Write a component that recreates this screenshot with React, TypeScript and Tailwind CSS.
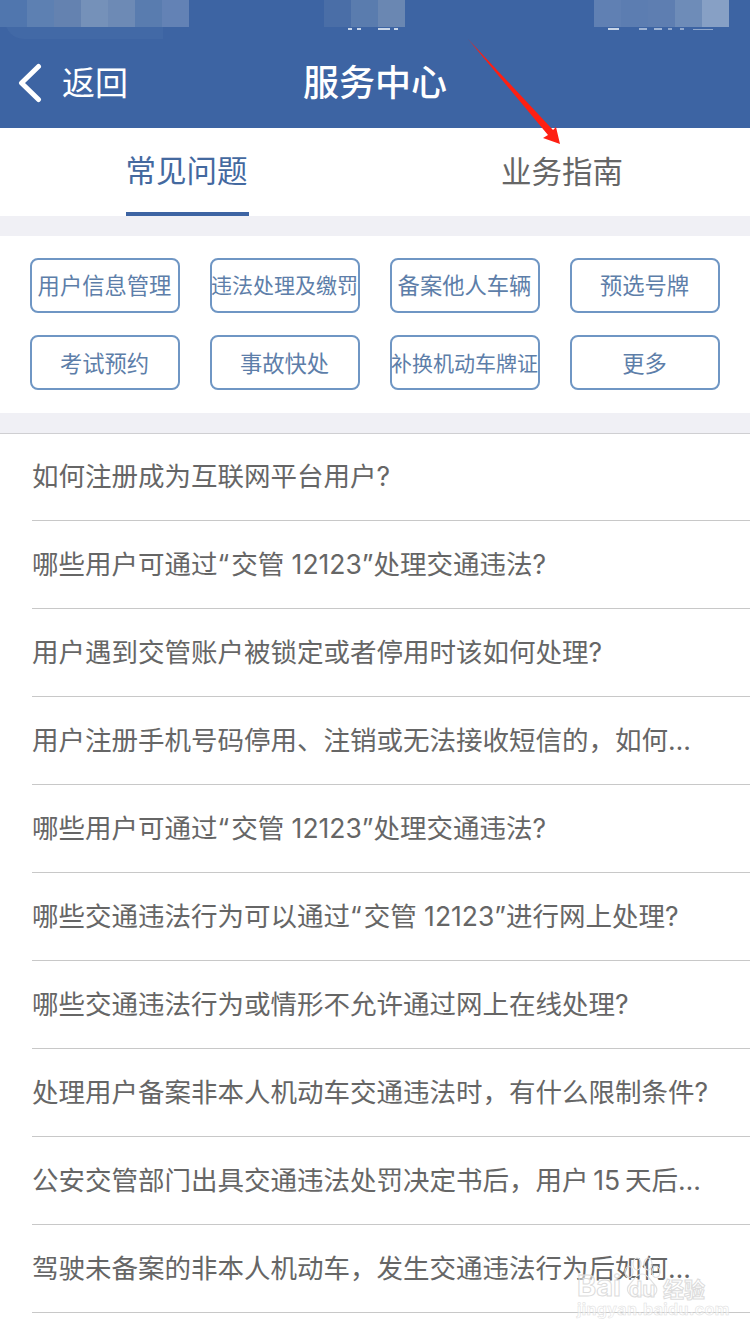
const font = { fontFamily: '"Inter", "Noto Sans CJK SC", sans-serif' };

const leftCells = ["bg-[#5076ae]", "bg-[#5d80b2]", "bg-[#6482b0]", "bg-[#7591b9]", "bg-[#6d8ab5]", "bg-[#597caf]", "bg-[#6382b5]"];
const midCells = ["bg-[#4a6ea7]", "bg-[#5a7cae]", "bg-[#6a87b2]"];
const rightCells = ["bg-[#6080b3]", "bg-[#5c7db1]", "bg-[#5e7eb1]", "bg-[#6e8cb8]", "bg-[#87a0c5]"];

const row1 = ["用户信息管理", "违法处理及缴罚", "备案他人车辆", "预选号牌"];
const row2 = ["考试预约", "事故快处", "补换机动车牌证", "更多"];

const questions = [
  "如何注册成为互联网平台用户?",
  "哪些用户可通过“交管 12123”处理交通违法?",
  "用户遇到交管账户被锁定或者停用时该如何处理?",
  "用户注册手机号码停用、注销或无法接收短信的\uFF0C如何处理?",
  "哪些用户可通过“交管 12123”处理交通违法?",
  "哪些交通违法行为可以通过“交管 12123”进行网上处理?",
  "哪些交通违法行为或情形不允许通过网上在线处理?",
  "处理用户备案非本人机动车交通违法时\uFF0C有什么限制条件?",
  "公安交管部门出具交通违法处罚决定书后\uFF0C用户\u200915\u2009天后未处理?",
  "驾驶未备案的非本人机动车\uFF0C发生交通违法行为后如何处理?",
];

function Chip({ label, second }: { label: string; second: boolean }) {
  const long = label.length > 6;
  return (
    <div
      className={`flex h-[55px] items-center justify-center whitespace-nowrap rounded-lg border-2 border-[#6f96c4] text-[#5d7ea9] ${
        long ? "text-[21px]" : "text-[22.3px]"
      } ${second ? "pt-[2px]" : "pt-[1px]"}`}
    >
      <span className="ml-[-1px]">{label}</span>
    </div>
  );
}

function Mosaic({ cells, className }: { cells: string[]; className: string }) {
  return (
    <div className={`absolute top-0 flex h-[27px] ${className}`}>
      {cells.map((c, i) => (
        <div key={i} className={`h-full w-[27px] ${c}`} />
      ))}
    </div>
  );
}

function Question({ text }: { text: string }) {
  const parts = text.split("“");
  if (parts.length === 1) return <>{text}</>;
  return (
    <>
      {parts[0]}
      <span className="pr-[2px]">“</span>
      {parts[1]}
    </>
  );
}

export default function App() {
  return (
    <div className="relative h-[1334px] w-[750px] overflow-hidden bg-white" style={font}>
      <header className="relative flex h-[128px] items-end bg-[#3d64a3] text-white">
        <div className="absolute left-[5px] top-[20px] h-[19px] w-[158px] rounded-bl-[24px] bg-[#4269a6]" />
        <Mosaic cells={leftCells} className="left-0" />
        <Mosaic cells={midCells} className="left-[324px]" />
        <Mosaic cells={rightCells} className="left-[594px]" />
        <svg className="absolute left-0 top-[27px]" width="750" height="5" viewBox="0 0 750 5" fill="#c9d6e8">
          <rect x="348" y="1" width="4" height="2" />
          <rect x="357" y="1" width="4" height="2" />
          <rect x="378" y="1" width="12" height="2" />
          <rect x="394" y="1" width="4" height="2" />
          <rect x="608" y="1" width="11" height="2" />
          <rect x="639" y="1" width="8" height="2" opacity="0.7" />
          <rect x="654" y="1" width="8" height="2" opacity="0.7" />
          <rect x="668" y="1" width="4" height="2" opacity="0.6" />
          <rect x="680" y="1" width="4" height="2" opacity="0.6" />
          <rect x="693" y="2" width="20" height="1" opacity="0.6" />
        </svg>
        <div className="flex h-[88px] w-full items-center pb-[2px]">
          <svg width="26" height="40" viewBox="0 0 26 40" className="ml-[17px] shrink-0" fill="none">
            <path d="M21.5 3.5 L4.5 20 L21.5 36.5" stroke="#fff" strokeWidth="5" strokeLinecap="round" strokeLinejoin="round" />
          </svg>
          <span className="ml-[19px] w-[66px] text-[33px] leading-none">返回</span>
          <span className="ml-[175px] text-[36px] font-medium leading-none">服务中心</span>
        </div>
      </header>

      <nav className="grid h-[88px] grid-cols-2 bg-white text-[30.5px]">
        <div className="flex justify-center">
          <div className="flex h-full w-[123px] items-center justify-center whitespace-nowrap border-b-4 border-[#3d64a3] pt-[2px] text-[#44699f]">
            <span className="ml-[-2px]">常见问题</span>
          </div>
        </div>
        <div className="flex items-center justify-center text-[#666666]">
          <span className="ml-[-1px]">业务指南</span>
        </div>
      </nav>

      <div className="h-[20px] bg-[#f0f0f5]" />

      <section className="grid h-[177px] grid-cols-4 content-start gap-x-[30px] gap-y-[22px] px-[30px] pt-[22px]">
        {row1.map((label) => (
          <Chip key={label} label={label} second={false} />
        ))}
        {row2.map((label) => (
          <Chip key={label} label={label} second={true} />
        ))}
      </section>

      <div className="h-[20px] bg-[#f0f0f5]" />

      <ul className="border-t border-[#cfcfd2] pl-[32px] text-[26.5px] text-[#666666]">
        {questions.map((q, i) => (
          <li
            key={i}
            className={`flex items-center border-b border-[#c8c8c8] pr-[38px] ${i === 0 ? "h-[87px]" : "h-[88px]"} ${i > 0 ? "" : ""}`}
          >
            <span className="block w-full truncate">
              <Question text={q} />
            </span>
          </li>
        ))}
      </ul>

      <svg className="absolute left-[460px] top-[30px]" width="110" height="125" viewBox="0 0 110 125">
        <path d="M8 9 L93 100 L96 97 L100 114 L83 108 L88 105 Z" fill="#fe1f12" />
      </svg>

      <svg className="absolute left-[622px] top-[1255px]" width="40" height="44" viewBox="0 0 40 44" fill="none" stroke="#e2e2e2" strokeWidth="1.2">
        <ellipse cx="7" cy="17" rx="4" ry="5.5" />
        <ellipse cx="15" cy="9" rx="4" ry="6" />
        <ellipse cx="26" cy="9" rx="4" ry="6" />
        <ellipse cx="34" cy="17" rx="4" ry="5.5" />
        <path d="M20 19 C14 19 12 25 8 29 C3 34 6 41 13 41 C16 41 18 40 20 40 C23 40 25 41 28 41 C35 41 37 34 32 29 C28 25 26 19 20 19 Z" />
      </svg>

      <div className="absolute left-[577px] top-[1271px] flex items-end text-[29px] font-bold leading-none text-white/50 [-webkit-text-stroke:1px_#dcdcdc]">
        <span className="w-[52px]">Bai</span>
        <span className="w-[34px] text-[21px] text-white/70">du</span>
        <span className="text-[21px]">经验</span>
      </div>
      <div className="absolute left-[577px] top-[1301px] text-[16px] font-bold leading-none tracking-[0.4px] text-white/50 [-webkit-text-stroke:0.5px_#dcdcdc]">
        jingyan.baidu.com
      </div>
    </div>
  );
}
